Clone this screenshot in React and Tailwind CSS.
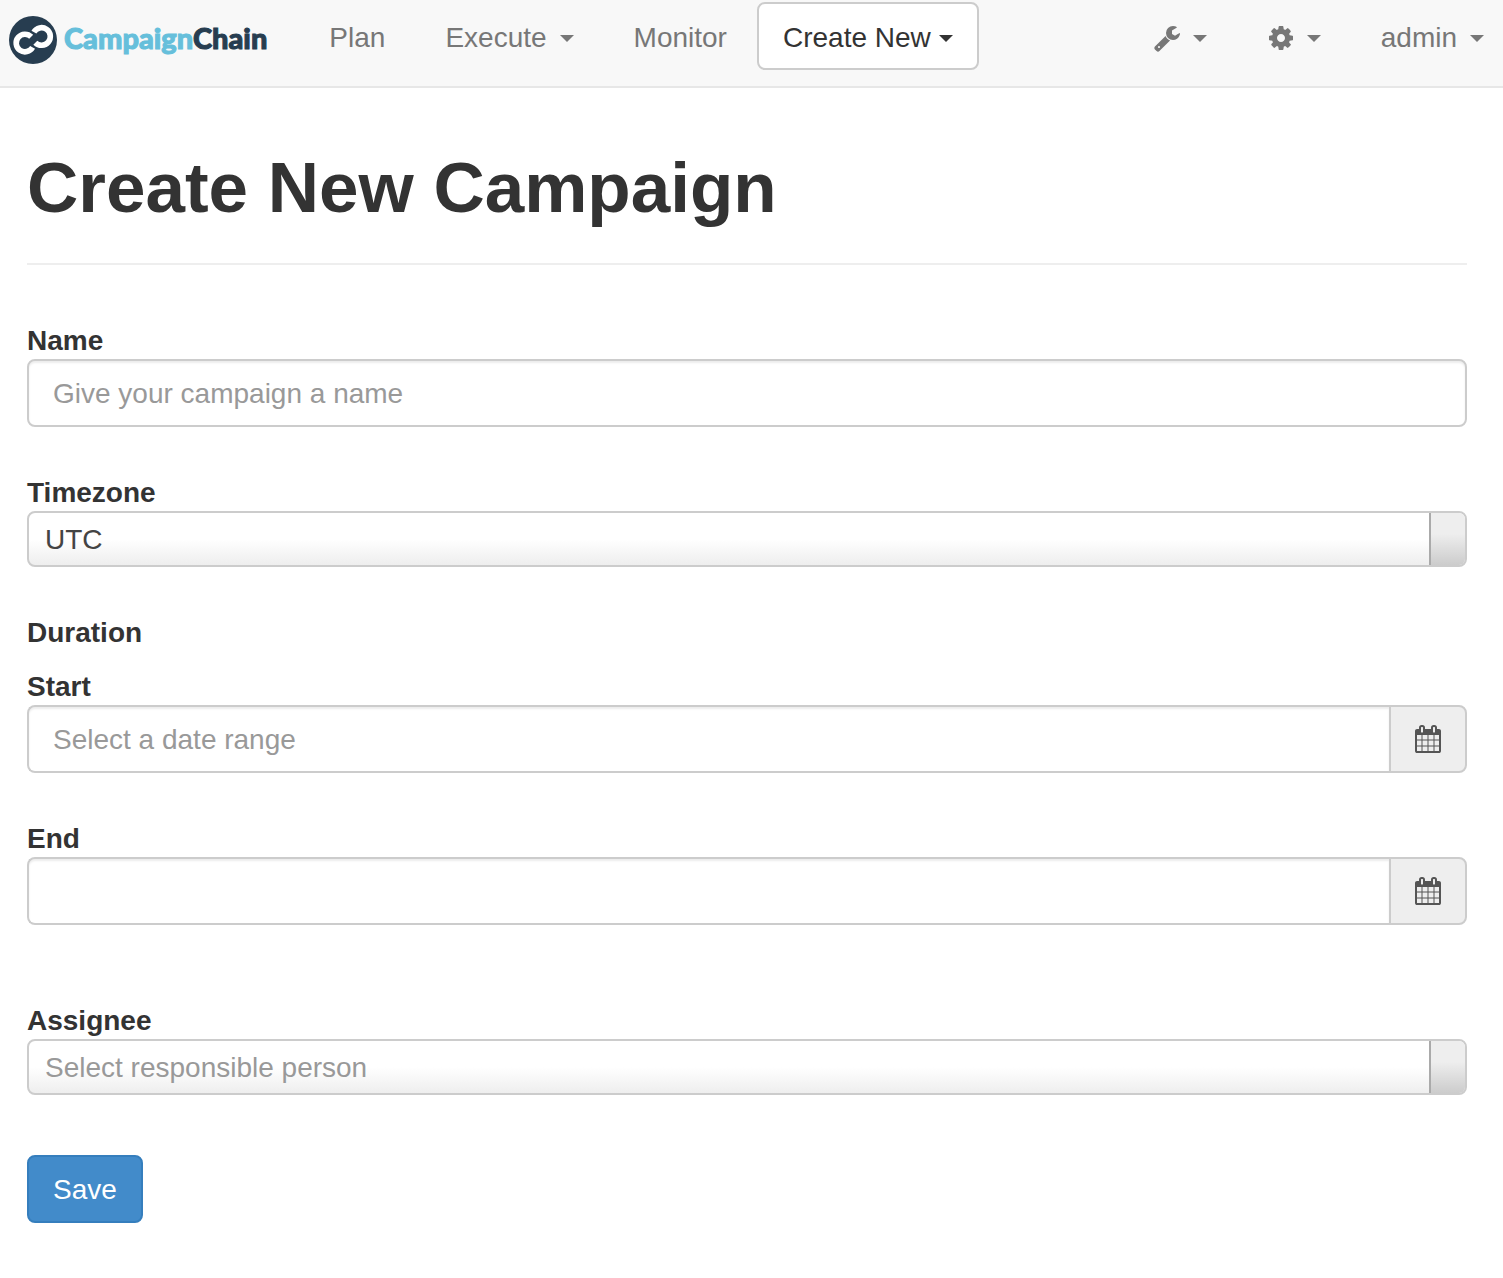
import React from "react";

const WRENCH =
  "M448 1472q0-26-19-45t-45-19-45 19-19 45 19 45 45 19 45-19 19-45zm644-420l-682 682q-37 37-90 37-52 0-91-37l-106-108q-38-36-38-90 0-53 38-91l681-681q39 98 114.5 173.5t173.5 114.5zm634-435q0 39-23 106-47 134-164.5 217.5t-258.5 83.5q-185 0-316.5-131.5t-131.5-316.5 131.5-316.5 316.5-131.5q58 0 121.5 16.5t107.5 46.5q16 11 16 28t-16 28l-293 169v224l193 107q5-3 79-48.5t135.5-81 70.5-35.5q15 0 23.5 10t8.5 25z";
const COG =
  "M1152 896q0-106-75-181t-181-75-181 75-75 181 75 181 181 75 181-75 75-181zm512-109v222q0 12-8 23t-20 13l-185 28q-19 54-39 91 35 50 107 138 10 12 10 25t-9 23q-27 37-99 108t-94 71q-12 0-26-9l-138-108q-44 23-91 38-16 136-29 186-7 28-36 28h-222q-14 0-24.5-8.5t-11.5-21.5l-28-184q-49-16-90-37l-141 107q-10 9-25 9-14 0-25-11-126-114-165-168-7-10-7-23 0-12 8-23 15-21 51-66.5t54-70.5q-27-50-41-99l-183-27q-13-2-21-12.5t-8-23.5v-222q0-12 8-23t19-13l186-28q14-46 39-92-40-57-107-138-10-12-10-24 0-10 9-23 26-36 98.5-107.5t94.5-71.5q13 0 26 10l138 107q44-23 91-38 16-136 29-186 7-28 36-28h222q14 0 24.5 8.5t11.5 21.5l28 184q49 16 90 37l142-107q9-9 24-9 13 0 25 10 129 119 165 170 7 8 7 22 0 12-8 23-15 21-51 66.5t-54 70.5q26 50 41 98l183 28q13 2 21 12.5t8 23.5z";
const CALENDAR =
  "M192 1664h288v-288h-288v288zm352 0h320v-288h-320v288zm-352-352h288v-320h-288v320zm352 0h320v-320h-320v320zm-352-384h288v-288h-288v288zm736 736h320v-288h-320v288zm-384-736h320v-288h-320v288zm768 736h288v-288h-288v288zm-384-352h320v-320h-320v320zm-352-864v-288q0-13-9.5-22.5t-22.5-9.5h-64q-13 0-22.5 9.5t-9.5 22.5v288q0 13 9.5 22.5t22.5 9.5h64q13 0 22.5-9.5t9.5-22.5zm736 864h288v-320h-288v320zm-384-384h320v-288h-320v288zm384 0h288v-288h-288v288zm32-480v-288q0-13-9.5-22.5t-22.5-9.5h-64q-13 0-22.5 9.5t-9.5 22.5v288q0 13 9.5 22.5t22.5 9.5h64q13 0 22.5-9.5t9.5-22.5zm384-64v1280q0 52-38 90t-90 38h-1408q-52 0-90-38t-38-90v-1280q0-52 38-90t90-38h128v-96q0-66 47-113t113-47h64q66 0 113 47t47 113v96h384v-96q0-66 47-113t113-47h64q66 0 113 47t47 113v96h128q52 0 90 38t38 90z";

function Icon({ path }) {
  return (
    <svg viewBox="0 0 1792 1792" className="size-7 shrink-0" fill="currentColor" aria-hidden="true">
      <path d={path} />
    </svg>
  );
}

function Caret() {
  return (
    <svg viewBox="0 0 14 7" className="h-[7px] w-[14px] shrink-0" fill="currentColor" aria-hidden="true">
      <path d="M0 0h14L7 7z" />
    </svg>
  );
}

function Logo() {
  return (
    <a href="#home" className="flex items-center gap-[7px] font-[Lato,sans-serif] text-[29px] leading-9 font-black">
      <svg viewBox="0 0 48 48" className="size-12 shrink-0" aria-hidden="true">
        <circle cx="24" cy="24" r="24" fill="#273d50" />
        <g fill="none" stroke="#fff" strokeWidth="5.6">
          <path d="M22.2 20.8A8.8 8.8 0 1 0 23.6 31.4" />
          <path d="M24.9 16.1A8.8 8.8 0 1 1 26.3 26.7" />
        </g>
      </svg>
      <span className="pb-1 text-[#66bfdb] [-webkit-text-stroke:1px_currentColor]">
        Campaign<span className="text-[#273d50]">Chain</span>
      </span>
    </a>
  );
}

function DateField({ id, label, placeholder }) {
  return (
    <div>
      <label htmlFor={id} className="block pt-1 leading-9 font-bold">{label}</label>
      <div className="flex h-[68px]">
        <input
          id={id}
          type="text"
          placeholder={placeholder}
          className="min-w-0 flex-1 rounded-l-lg border-2 border-r-0 border-[#ccc] bg-white px-6 pt-[2px] text-[#555] shadow-[inset_0_2px_2px_rgba(0,0,0,0.075)] outline-none placeholder:text-[#999]"
        />
        <button
          type="button"
          aria-label={`Pick ${label} date`}
          className="flex w-[78px] items-center justify-center rounded-r-lg border-2 border-[#ccc] bg-[#eee] text-[#555]"
        >
          <Icon path={CALENDAR} />
        </button>
      </div>
    </div>
  );
}

function SelectField({ id, label, value, color }) {
  return (
    <div>
      <label htmlFor={id} className="block pt-1 leading-9 font-bold">{label}</label>
      <div className="flex h-14 overflow-hidden rounded-lg border-2 border-[#ccc] bg-[linear-gradient(to_top,#eee_0%,#fff_50%)]">
        <select id={id} className={`min-w-0 flex-1 appearance-none bg-transparent px-4 pt-[2px] outline-none ${color}`}>
          <option>{value}</option>
        </select>
        <span className="w-9 border-l-2 border-[#aaa] bg-[linear-gradient(to_top,#ccc_0%,#eee_60%)]" />
      </div>
    </div>
  );
}

export default function App() {
  return (
    <div className="font-['Liberation_Sans',Arial,sans-serif] text-[28px] leading-10 text-[#333]">
      <header className="flex h-[88px] items-start border-b-2 border-[#e7e7e7] bg-[#f8f8f8] pr-[19px] pl-[9px] text-[#777]">
        <div className="pt-4">
          <Logo />
        </div>
        <nav className="ml-8 flex flex-1 items-start">
          <a href="#plan" className="px-[30px] py-[18px]">Plan</a>
          <button type="button" className="flex items-center gap-[13px] px-[30px] py-[18px]">
            Execute <Caret />
          </button>
          <a href="#monitor" className="px-[30px] py-[18px]">Monitor</a>
          <button
            type="button"
            className="mt-[2px] flex h-[68px] items-center gap-2 rounded-lg border-2 border-[#ccc] bg-white px-6 pt-1 text-[#333]"
          >
            Create New <Caret />
          </button>
        </nav>
        <div className="flex items-start gap-[60px] py-[18px]">
          <button type="button" aria-label="Tools" className="flex h-10 items-center gap-3">
            <Icon path={WRENCH} />
            <Caret />
          </button>
          <button type="button" aria-label="Settings" className="flex h-10 items-center gap-3">
            <Icon path={COG} />
            <Caret />
          </button>
          <button type="button" className="flex items-center gap-[13px]">
            admin <Caret />
          </button>
        </div>
      </header>

      <main className="pr-9 pb-14 pl-[27px]">
        <h1 className="border-b-2 border-[#eee] pt-[60px] pb-[35px] text-[71px] leading-[80px] font-bold">Create New Campaign</h1>
        <form className="pt-[54px]">
          <div className="flex flex-col gap-11">
            <div>
              <label htmlFor="name" className="block pt-1 leading-9 font-bold">Name</label>
              <input
                id="name"
                type="text"
                placeholder="Give your campaign a name"
                className="block h-[68px] w-full rounded-lg border-2 border-[#ccc] bg-white px-6 pt-[2px] text-[#555] shadow-[inset_0_2px_2px_rgba(0,0,0,0.075)] outline-none placeholder:text-[#999]"
              />
            </div>
            <SelectField id="timezone" label="Timezone" value="UTC" color="text-[#444]" />
            <fieldset>
              <legend className="mb-[14px] pt-1 leading-9 font-bold">Duration</legend>
              <div className="flex flex-col gap-11">
                <DateField id="start" label="Start" placeholder="Select a date range" />
                <DateField id="end" label="End" />
              </div>
            </fieldset>
          </div>
          <div className="mt-[74px]">
            <SelectField id="assignee" label="Assignee" value="Select responsible person" color="text-[#999]" />
          </div>
          <button
            type="submit"
            className="mt-[60px] h-[68px] rounded-lg border-2 border-[#357ebd] bg-[#428bca] px-6 pt-[2px] text-white"
          >
            Save
          </button>
        </form>
      </main>
    </div>
  );
}
